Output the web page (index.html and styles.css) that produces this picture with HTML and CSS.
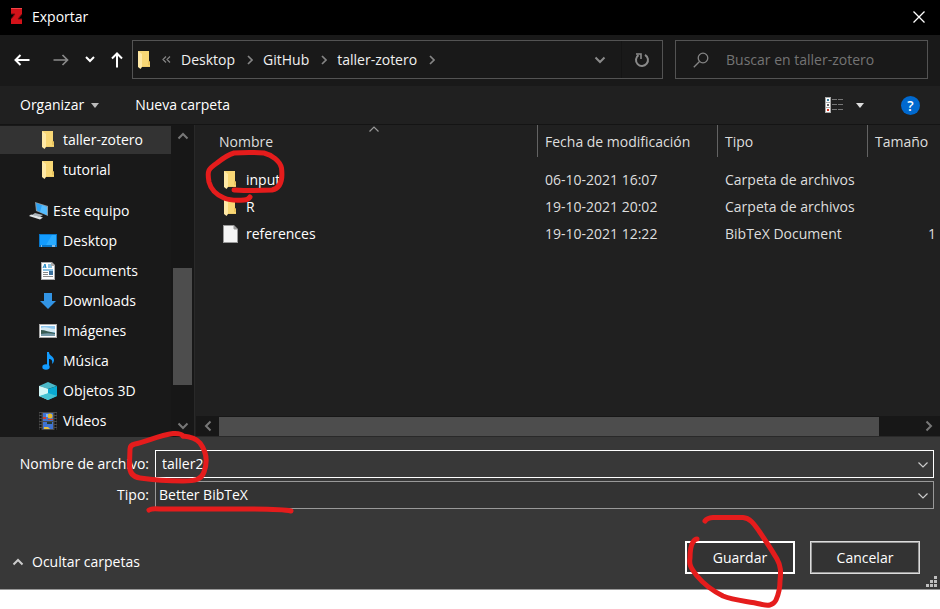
FILE: index.html
```html
<!DOCTYPE html>
<html lang="es">
<head>
<meta charset="utf-8">
<title>Exportar</title>
<link rel="stylesheet" href="styles.css">
</head>
<body>
<svg class="defs" aria-hidden="true">
  <symbol id="folder" viewBox="0 0 14 18">
    <path d="M1 1h11v11h1v4H3z" fill="#f0cd6a"/>
    <path d="M1 0h11v10l1 1v4H3z" fill="#f8d775"/>
    <path d="M1 0l4 3v13l-1.500 2L1 16z" fill="#ffe9a6"/>
    <path d="M12 10v4" stroke="#dcb24a" fill="none"/>
  </symbol>
  <symbol id="crumb" viewBox="0 0 6 10"><path d="M1 1l4 4-4 4" fill="none" stroke="#858585" stroke-width="1.700"/></symbol>
  <symbol id="down" viewBox="0 0 12 8"><path d="M1.500 1.500L6 6l4.500-4.500" fill="none" stroke="currentColor" stroke-width="2"/></symbol>
  <symbol id="thin-down" viewBox="0 0 10 6"><path d="M.5 .5L5 5 9.500 .5" fill="none" stroke="currentColor" stroke-width="1.200"/></symbol>
</svg>

<div class="dialog">
  <header class="titlebar">
    <svg class="app-icon" width="13" height="17" viewBox="0 0 13 17"><path d="M1 0h11v6l-4 5h4v5H1v-5l4-5H1z" fill="#d31219"/><path d="M1 6h4L1 11M12 6l-4 5h4" fill="none" stroke="#760b0e"/><path d="M1 0h11v1H1z" fill="#f04548"/></svg>
    <h1>Exportar</h1>
    <button class="close" aria-label="Cerrar"><svg width="12" height="12" viewBox="0 0 12 12"><path d="M.5 .5l11 11M11.500 .5l-11 11" stroke="#fff" stroke-width="1.300"/></svg></button>
  </header>

  <div class="navbar">
    <div class="history">
      <button aria-label="Atrás"><svg width="16" height="12" viewBox="0 0 16 12"><path d="M15.500 6H1.500M6.500 1l-5 5 5 5" fill="none" stroke="#fff" stroke-width="2"/></svg></button>
      <button aria-label="Adelante"><svg width="16" height="12" viewBox="0 0 16 12"><path d="M.5 6h14M9.500 1l5 5-5 5" fill="none" stroke="#8a8a8a" stroke-width="1.700"/></svg></button>
      <button class="recent" aria-label="Recientes"><svg width="10" height="7" viewBox="0 0 10 7"><path d="M1 1l4 4 4-4" fill="none" stroke="#fff" stroke-width="2"/></svg></button>
      <button class="up" aria-label="Subir"><svg width="12" height="16" viewBox="0 0 12 16"><path d="M6 15.500V1.500M1 6.500l5-5 5 5" fill="none" stroke="#fff" stroke-width="2"/></svg></button>
    </div>
    <div class="address">
      <svg width="14" height="18"><use href="#folder"/></svg>
      <svg class="more" width="9" height="7" viewBox="0 0 9 7"><path d="M4 .5l-3 3 3 3M8 .5l-3 3 3 3" fill="none" stroke="#858585" stroke-width="1.200"/></svg>
      <a href="#">Desktop</a><svg width="6" height="10"><use href="#crumb"/></svg>
      <a href="#">GitHub</a><svg width="6" height="10"><use href="#crumb"/></svg>
      <a href="#">taller-zotero</a><svg width="6" height="10"><use href="#crumb"/></svg>
      <button class="expand" aria-label="Ubicaciones anteriores"><svg width="12" height="8"><use href="#down"/></svg></button>
      <button class="reload" aria-label="Actualizar"><svg width="16" height="16" viewBox="0 0 16 16"><path d="M11 2.800a6 6 0 1 1-6.500.3" fill="none" stroke="#8a8a8a" stroke-width="2"/><path d="M2 2h5v5" fill="none" stroke="#8a8a8a" stroke-width="1.600"/></svg></button>
    </div>
    <label class="search">
      <svg width="16" height="16" viewBox="0 0 16 16"><circle cx="10" cy="6" r="4.800" fill="none" stroke="#858585" stroke-width="1.300"/><path d="M6.500 9.500L.8 15.200" stroke="#858585" stroke-width="1.300"/></svg>
      <input type="text" placeholder="Buscar en taller-zotero" aria-label="Buscar en taller-zotero">
    </label>
  </div>

  <div class="toolbar">
    <button class="organize">Organizar <svg width="8" height="5" viewBox="0 0 8 5"><path d="M0 0h8L4 5z" fill="#bbb"/></svg></button>
    <button>Nueva carpeta</button>
    <button class="view" aria-label="Cambiar la vista"><svg width="19" height="16" viewBox="0 0 19 16"><path d="M0 0h6v16H0z" fill="#aaa"/><path d="M1 1h4v4H1zM1 6h4v4H1zM1 11h4v4H1z" fill="#fff"/><path d="M2 2h2v2H2z" fill="#3a7d9c"/><path d="M2 7h2v2H2z" fill="#666"/><path d="M2 12h2v2H2z" fill="#d8321c"/><path d="M7 2.500h5M13 2.500h5M7 7.500h5M13 7.500h5M7 12.500h5M13 12.500h5" stroke="#777"/></svg></button>
    <button class="view-menu" aria-label="Más opciones"><svg width="8" height="5" viewBox="0 0 8 5"><path d="M0 0h8L4 5z" fill="#ddd"/></svg></button>
    <button class="help" aria-label="Ayuda">?</button>
  </div>

  <main class="browser">
    <nav class="tree">
      <a class="selected" href="#"><svg width="14" height="18"><use href="#folder"/></svg>taller-zotero</a>
      <a href="#"><svg width="14" height="18"><use href="#folder"/></svg>tutorial</a>
      <a class="root" href="#"><svg width="20" height="18" viewBox="0 0 20 18"><path d="M6 0l13 4v10L7 9z" fill="#8b9aa4"/><path d="M7 1l11 4v8L8 8.500z" fill="#2fa4f4"/><path d="M13 3l5 2v8l-7-3z" fill="#55bdff"/><path d="M6 11l8 2-3 2-8-2z" fill="#a9b2b8"/><path d="M2 12.500l12 3-3 2-11-3.500z" fill="#dfe4e7"/></svg>Este equipo</a>
      <a href="#"><svg width="18" height="14" viewBox="0 0 18 14"><path d="M0 0h18v13H0z" fill="#0876c9"/><path d="M1 1h16v10H1z" fill="#139cff"/><path d="M13 1h4v10H7z" fill="#29abff"/><path d="M2 12h1M13 12h3" stroke="#fff"/></svg>Desktop</a>
      <a href="#"><svg width="14" height="18" viewBox="0 0 14 18"><path d="M0 0h11l3 3v15H0z" fill="#aaa"/><path d="M1 1h9v3h3v13H1z" fill="#fff"/><path d="M2 6l2-4 1 4M3 5h2M7 3h3M7 5h4M2 8h10" fill="none" stroke="#1886c5"/><path d="M2 10.500h5M2 12.500h5M2 14.500h10" stroke="#888"/><path d="M8 9h4v4H8z" fill="#3b719d"/></svg>Documents</a>
      <a href="#"><svg width="16" height="16" viewBox="0 0 16 16"><path d="M4 0h8v8h4l-8 8-8-8h4z" fill="#3294e4"/></svg>Downloads</a>
      <a href="#"><svg width="18" height="14" viewBox="0 0 18 14"><path d="M0 0h18v14H0z" fill="#aaa"/><path d="M1 1h16v12H1z" fill="#fff"/><path d="M2 2h14v10H2z" fill="#8ec7ef"/><path d="M2 4c5-2 8 1 14 1v3H2z" fill="#d5eaf3"/><path d="M2 6c4 0 8 2 14 3v1H2z" fill="#375b53"/><path d="M2 10c5-1 9-1 14 0v2H2z" fill="#7499a8"/></svg>Imágenes</a>
      <a href="#"><svg width="12" height="18" viewBox="0 0 12 18"><ellipse cx="4" cy="15" rx="3.700" ry="2.700" fill="#139cff"/><path d="M5 0h2c0 4 5 4 5 8 0 2-1 3-2 4 1-4-1-5-3-5v8H5z" fill="#139cff"/></svg>Música</a>
      <a href="#"><svg width="18" height="18" viewBox="0 0 18 18"><path d="M0 4l9-4 9 4-9 3z" fill="#4bb9c9"/><path d="M0 4l9 3v11l-9-4z" fill="#b9f0f3"/><path d="M18 4L9 7v11l9-4z" fill="#08a9d2"/><path d="M0 14l9-3 9 3-9 4z" fill="#45c3d3"/><path d="M0 4l9 3v4l-9 3z" fill="#d3f7f7"/></svg>Objetos 3D</a>
      <a href="#"><svg width="18" height="18" viewBox="0 0 18 18"><path d="M0 0h18v18H0z" fill="#4b4b4b"/><path d="M1.500 1v17M16.500 1v17" stroke="#111" stroke-width="2" stroke-dasharray="2 1"/><path d="M4 1h10v8H4zM4 10h10v7H4z" fill="#3f73d2"/><circle cx="11" cy="4" r="2.500" fill="#e9b928"/><path d="M4 5h3v2H4zM9 7h5v1H9z" fill="#d13c2c"/><path d="M8 10h5v2H8z" fill="#263b30"/><path d="M5 15h4l2 2H5z" fill="#e9c340"/><path d="M7 2h2v3H7z" fill="#83b8ef"/></svg>Videos</a>
    </nav>
    <div class="vscroll">
      <svg class="flip" width="12" height="8"><use href="#down"/></svg>
      <div class="vtrack"><div class="vthumb"></div></div>
      <svg width="12" height="8"><use href="#down"/></svg>
    </div>
    <section class="files">
      <svg class="sort" width="10" height="6"><use href="#thin-down"/></svg>
      <table>
        <colgroup><col class="c-name"><col class="c-date"><col class="c-type"><col></colgroup>
        <thead><tr><th>Nombre</th><th>Fecha de modificación</th><th>Tipo</th><th>Tamaño</th></tr></thead>
        <tbody>
          <tr><td><div class="file"><svg width="14" height="18"><use href="#folder"/></svg>input
            <svg class="mark mark-input" width="82" height="54" viewBox="206 149 82 54"><path d="M251 197Q249 200 245 200Q232 201 225 198C218 195 212 190 210 182C208 171 209 169 218 163Q228 155 235 153Q250 152 265 153C273 155 281 161 282.500 168C284 180 282 188 273 190Q255 191 235 190"/></svg></div></td><td>06-10-2021 16:07</td><td>Carpeta de archivos</td><td></td></tr>
          <tr><td><div class="file"><svg width="14" height="18"><use href="#folder"/></svg>R</div></td><td>19-10-2021 20:02</td><td>Carpeta de archivos</td><td></td></tr>
          <tr><td><div class="file"><svg class="page" width="15" height="18" viewBox="0 0 15 18"><path d="M0 0h11l4 4v14H0z" fill="#999"/><path d="M1 1h10v3h3v13H1z" fill="#f5f5f5"/><path d="M11 1v3h3" fill="none" stroke="#999"/></svg>references</div></td><td>19-10-2021 12:22</td><td>BibTeX Document</td><td>1</td></tr>
        </tbody>
      </table>
      <div class="hscroll">
        <svg class="left" width="12" height="8"><use href="#down"/></svg>
        <div class="htrack"><div class="hthumb"></div></div>
        <svg class="right" width="12" height="8"><use href="#down"/></svg>
      </div>
    </section>
  </main>

  <form class="save">
    <div class="fields">
      <label for="name">Nombre de archivo:</label>
      <div class="combo">
        <input id="name" type="text" value="taller2">
        <svg class="arrow" width="10" height="6"><use href="#thin-down"/></svg>
        <svg class="mark mark-name" width="84" height="54" viewBox="126 429 84 54"><path d="M183 435Q181 432 173 432.500C160 434 145 441 135 443Q130 444 130 448L129.500 462C129 470 132 476 140 477Q160 480 183 480C195 480 201 479 204 471C208 460 206 450 200 442Q195 436 183 435"/></svg>
      </div>
      <label for="type">Tipo:</label>
      <div class="combo">
        <select id="type"><option>Better BibTeX</option></select>
        <svg class="arrow" width="10" height="6"><use href="#thin-down"/></svg>
        <svg class="mark mark-type" width="150" height="8" viewBox="146 505 150 8"><path d="M149 509Q152 507 160 508H240Q282 508 291 510"/></svg>
      </div>
    </div>
    <div class="actions">
      <button class="hide" type="button"><svg class="flip" width="12" height="8"><use href="#down"/></svg>Ocultar carpetas</button>
      <div class="primary">
        <button class="btn default" type="button">Guardar</button>
        <svg class="mark mark-save" width="98" height="94" viewBox="686 514 98 94"><path d="M705 520Q707 517 713 516.500H743C750 517 754 523 759 530Q770 546 777 558C781 565 781 571 780 580Q780 590 776 599C773 605 768 605 760 603C748 600 735 600 723 595Q707 587 697 575C690 566 689 563 690 557Q690 546 693 541Q695 538 697 538"/></svg>
      </div>
      <button class="btn" type="button">Cancelar</button>
    </div>
    <svg class="grip" width="11" height="11" viewBox="0 0 11 11"><path d="M8 0h3v3H8zM4 4h3v3H4zM8 4h3v3H8zM0 8h3v3H0zM4 8h3v3H4zM8 8h3v3H8z" fill="#bfbfbf"/></svg>
  </form>
</div>
</body>
</html>
```
FILE: styles.css
```css
* { box-sizing: border-box; }
body {
  min-height: 100vh;
  margin: 0;
  background: #fff;
  color: #fff;
  font: 14px/20px "Open Sans", "Noto Sans", sans-serif;
}
button, input, select { font: inherit; color: inherit; }
button { background: none; border: 0; padding: 0; }
a { color: inherit; text-decoration: none; }
svg { display: block; flex: none; }
.defs { position: absolute; width: 0; height: 0; }
.dialog { border-bottom: 1px solid #999; }
.flip { transform: rotate(180deg); }

.titlebar {
  display: flex;
  align-items: center;
  height: 35px;
  padding: 0 15px 2px 10px;
  background: #000;
}
.titlebar h1 { margin: 0 0 0 9px; font-size: 14px; font-weight: 400; }
.close { margin-left: auto; }

.navbar {
  display: flex;
  align-items: center;
  height: 51px;
  padding: 0 12px 2px 14px;
  background: #191919;
}
.history { display: flex; align-items: center; width: 118px; }
.history button + button { margin-left: 23px; }
.history .recent + .up, .history button + .recent { margin-left: 16px; }
.address {
  display: flex;
  flex: 2 1 0;
  align-items: center;
  height: 39px;
  padding-left: 4px;
  border: 1px solid #535353;
  color: #f0f0f0;
}
.address a { margin: 0 12px 0 10px; }
.more { margin-left: 11px; }
.expand { margin-left: auto; padding: 0 15px; color: #8a8a8a; }
.reload { height: 37px; padding: 0 12px; border-left: 1px solid #141414; }
.search {
  display: flex;
  align-items: center;
  width: 253px;
  height: 39px;
  margin-left: 12px;
  padding-left: 17px;
  border: 1px solid #535353;
}
.search input {
  flex: 1;
  min-width: 0;
  margin-left: 17px;
  padding: 0;
  border: 0;
  outline: 0;
  background: none;
}
.search input::placeholder { color: #747474; opacity: 1; }

.toolbar {
  display: flex;
  align-items: center;
  height: 39px;
  padding: 0 20px;
  border-bottom: 1px solid #141414;
  background: #202020;
}
.organize { display: flex; align-items: center; gap: 7px; margin-right: 36px; }
.view { margin-left: auto; }
.view-menu { margin: 0 37px 0 12px; }
.help {
  width: 19px;
  height: 19px;
  border-radius: 50%;
  background: #0069cf;
  font-weight: 600;
  line-height: 19px;
}

.browser { display: flex; background: #191919; }
.tree { width: 171px; }
.tree a {
  display: grid;
  grid-template-columns: 18px 1fr;
  column-gap: 6px;
  align-items: center;
  justify-items: start;
  height: 28px;
  margin: 1px 0 2px;
  padding-left: 39px;
  white-space: nowrap;
}
.tree svg { justify-self: center; }
.tree .selected { background: #333; }
.tree .root { grid-template-columns: 20px 1fr; column-gap: 4px; margin-top: 13px; padding-left: 29px; }
.vscroll {
  display: flex;
  flex-direction: column;
  align-items: center;
  width: 24px;
  padding: 7px 2px;
  border-right: 1px solid #292929;
  background: #171717;
  color: #777;
}
.vtrack { display: flex; flex: 1; flex-direction: column; justify-content: flex-end; width: 100%; padding-bottom: 37px; }
.vthumb { height: 42%; min-height: 117px; background: #4d4d4d; }

.files {
  position: relative;
  display: flex;
  flex: 1;
  flex-direction: column;
  justify-content: space-between;
  min-width: 0;
  padding-left: 1px;
  background: #202020;
}
.sort { position: absolute; top: 1px; left: 174px; color: #999; transform: rotate(180deg); }
table { width: 100%; table-layout: fixed; border-collapse: separate; border-spacing: 0; color: #dedede; }
.c-name { width: 341px; }
.c-date { width: 180px; }
.c-type { width: 150px; }
th, td { padding: 0 0 0 8px; font-weight: 400; text-align: left; white-space: nowrap; }
th { height: 32px; border-left: 1px solid #636363; padding: 2px 0 0 7px; }
th:first-child { border-left: 0; padding-left: 23px; }
td { height: 27px; }
td:first-child { padding-left: 27px; color: #fff; }
td:last-child { padding-right: 4px; text-align: right; }
tbody::before { content: ""; display: block; height: 9px; }
.file { position: relative; display: flex; align-items: center; gap: 9px; }
.file .page { margin-right: -1px; }
.hscroll { display: flex; align-items: center; height: 21px; border-bottom: 1px solid #292929; background: #171717; color: #777; }
.htrack { flex: 1; margin: 0 2px 0 5px; }
.hthumb { width: 94%; height: 19px; background: #4d4d4d; }
.left { margin-left: 6px; transform: rotate(90deg); }
.right { margin-right: 5px; transform: rotate(-90deg); }

.save { position: relative; padding: 13px 6px 15px 0; background: #383838; }
.fields { display: grid; grid-template-columns: 149px 1fr; gap: 3px 6px; align-items: center; }
.fields label { text-align: right; }
.combo { position: relative; }
.combo input, .combo select {
  display: block;
  width: 100%;
  height: 28px;
  border: 1px solid #fff;
  border-radius: 0;
  outline: 0;
  padding: 0 24px 0 6px;
  background: #383838;
}
.combo input { padding-bottom: 2px; }
.combo select { appearance: none; padding-left: 3px; border-color: #999; background: #333; }
.arrow { position: absolute; top: 12px; right: 6px; color: #ccc; pointer-events: none; }
.actions { display: flex; align-items: center; gap: 15px; margin-top: 32px; padding-right: 14px; }
.hide { display: flex; align-items: center; gap: 8px; margin: 8px auto 0 12px; color: #fff; }
.hide svg { color: #ccc; }
.primary { position: relative; }
.btn { display: block; width: 110px; height: 33px; border: 1px solid #ddd; outline: 1px solid #999; outline-offset: -2px; background: #333; }
.btn.default { border: 2px solid #fff; outline: 0; }
.grip { position: absolute; right: 3px; bottom: 2px; }

.mark { position: absolute; z-index: 2; fill: none; stroke: #e51c1c; stroke-width: 5; stroke-linecap: round; stroke-linejoin: round; pointer-events: none; }
.mark-input { top: -21px; left: -18px; }
.mark-name { top: -20px; left: -29px; }
.mark-type { top: 25px; left: -9px; }
.mark-save { top: -26px; left: 1px; }
```
